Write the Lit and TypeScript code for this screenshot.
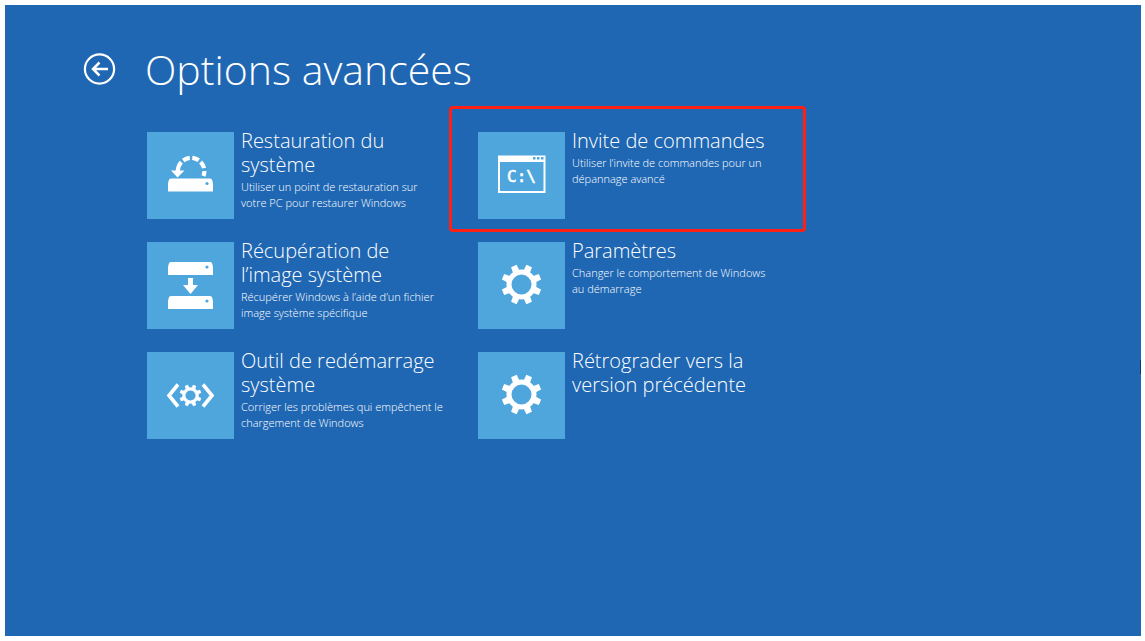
import { LitElement, html, svg, css, nothing } from "lit";
import { customElement } from "lit/decorators.js";

const teeth = (cx: number, cy: number, inner: number, outer: number, half: number) =>
  [0, 1, 2, 3, 4, 5, 6, 7].map(
    (i) => svg`<path fill="#fff" transform="rotate(${22.5 + i * 45} ${cx} ${cy})"
      d="M${cx - half - 0.4} ${cy - inner}L${cx - half} ${cy - outer}H${cx + half}L${cx + half + 0.4} ${cy - inner}Z"/>`
  );

const drive = (y: number) => svg`
  <path fill="#fff" d="M24 ${y}H63Q65 ${y} 65.3 ${y + 2}L66 ${y + 5}V${y + 13}H21V${y + 5}L21.7 ${y + 2}Q22 ${y} 24 ${y}Z"/>
  <circle cx="60" cy="${y + 5}" r="1.6" fill="#4ea6dd"/>`;

const gear = svg`
  <circle cx="43.5" cy="42.5" r="12.5" fill="none" stroke="#fff" stroke-width="5"/>
  ${teeth(43.5, 42.5, 14, 20, 3)}`;

const icons = {
  restore: svg`
    <path d="M56.5 44A13.3 13.3 0 1 0 30.8 39" fill="none" stroke="#fff" stroke-width="4.2" stroke-dasharray="5 3 7 2.5 7 2.5 7 2.5 20"/>
    <path d="M24 38.500H37.500L30.500 45.500Z" fill="#fff"/>
    ${drive(46.5)}`,
  image: svg`${drive(20)}
    <path d="M41 36H46V43H51L43.5 52L36 43H41Z" fill="#fff"/>
    ${drive(54)}`,
  startup: svg`
    <path d="M31 32.500L22 43.500L31 54.500M56 32.500L65 43.500L56 54.500" fill="none" stroke="#fff" stroke-width="3.6"/>
    <circle cx="43.5" cy="43.5" r="6.7" fill="none" stroke="#fff" stroke-width="3.2"/>
    ${teeth(43.5, 43.5, 7.5, 11, 1.6)}`,
  prompt: svg`
    <path d="M20 23.500H67.500V61H20ZM22 30V59H65.500V30Z" fill="#fff" fill-rule="evenodd"/>
    <path d="M55 25h2.500v2.500h-2.500zM59 25h2.500v2.500h-2.500zM63 25h2.500v2.500h-2.500z" fill="#4ea6dd"/>
    <text x="43.500" y="50" text-anchor="middle" class="prompt">C:\\</text>`,
  gear,
};

interface Option {
  icon: keyof typeof icons;
  title: string;
  text?: string;
  marked?: boolean;
}

const options: Option[] = [
  { icon: "restore", title: "Restauration du\nsystème", text: "Utiliser un point de restauration sur\nvotre PC pour restaurer Windows" },
  { icon: "prompt", title: "Invite de commandes", text: "Utiliser l’invite de commandes pour un\ndépannage avancé", marked: true },
  { icon: "image", title: "Récupération de\nl’image système", text: "Récupérer Windows à l’aide d’un fichier\nimage système spécifique" },
  { icon: "gear", title: "Paramètres", text: "Changer le comportement de Windows\nau démarrage" },
  { icon: "startup", title: "Outil de redémarrage\nsystème", text: "Corriger les problèmes qui empêchent le\nchargement de Windows" },
  { icon: "gear", title: "Rétrograder vers la\nversion précédente" },
];

@customElement("app-root")
export class AppRoot extends LitElement {
  static styles = css`
    :host {
      display: flex;
      box-sizing: border-box;
      min-height: 100vh;
      padding: 5px 4px 5px 5px;
      background: #fff;
      color: #fff;
      font-family: "Segoe UI", "Open Sans", "Noto Sans", sans-serif;
    }
    .screen {
      flex: 1;
      position: relative;
      padding: 32px 78px;
      background: #1f67b3;
    }
    .edge {
      position: absolute;
      right: 0;
      top: 355px;
      width: 1px;
      height: 14px;
      background: #0b3a75;
    }
    .header {
      display: flex;
      align-items: center;
      gap: 28px;
    }
    button {
      padding: 0;
      border: 0;
      background: none;
      color: inherit;
      font: inherit;
      text-align: left;
      cursor: pointer;
    }
    .back {
      display: block;
      width: 34px;
      height: 34px;
    }
    .back svg, .tile svg {
      display: block;
    }
    h1 {
      margin: 0;
      font-size: 41px;
      font-weight: 300;
      line-height: 64px;
    }
    .grid {
      display: grid;
      grid-template-columns: repeat(2, 307px);
      gap: 23px 24px;
      margin: 31px 0 0 64px;
    }
    .option {
      position: relative;
      display: flex;
      align-items: flex-start;
      gap: 7px;
    }
    .marked::after {
      content: "";
      position: absolute;
      inset: -26px -21px -13px -29px;
      border: 3px solid #ff1f14;
      border-radius: 4px;
    }
    .tile {
      flex: none;
      width: 87px;
      height: 87px;
      background: #4ea6dd;
    }
    .label {
      display: block;
      flex: 1;
    }
    .title {
      display: block;
      margin-top: -3px;
      font-size: 20px;
      font-weight: 300;
      line-height: 24px;
      white-space: pre-line;
    }
    .text {
      display: block;
      margin-top: 2px;
      font-size: 11px;
      font-weight: 360;
      line-height: 16px;
      white-space: pre-line;
    }
    .prompt {
      fill: #fff;
      stroke: #fff;
      stroke-width: 0.6px;
      font-family: "DejaVu Sans Mono", monospace;
      font-size: 16px;
    }
  `;

  render() {
    return html`
      <main class="screen">
        <header class="header">
          <button class="back" aria-label="Retour">
            <svg width="34" height="34" viewBox="0 0 34 34" fill="none" stroke="#fff">
              <circle cx="16.5" cy="17" r="14.6" stroke-width="2.200"/>
              <path d="M25 17H9.500M16.500 10.500L10 17L16.500 23.500" stroke-width="2.500"/>
            </svg>
          </button>
          <h1>Options avancées</h1>
        </header>
        <div class="grid">
          ${options.map(
            (o) => html`
              <button class="option ${o.marked ? "marked" : ""}">
                <span class="tile"><svg width="87" height="87" viewBox="0 0 87 87" aria-hidden="true">${icons[o.icon]}</svg></span>
                <span class="label">
                  <span class="title">${o.title}</span>
                  ${o.text ? html`<span class="text">${o.text}</span>` : nothing}
                </span>
              </button>`
          )}
        </div>
        <span class="edge"></span>
      </main>`;
  }
}
